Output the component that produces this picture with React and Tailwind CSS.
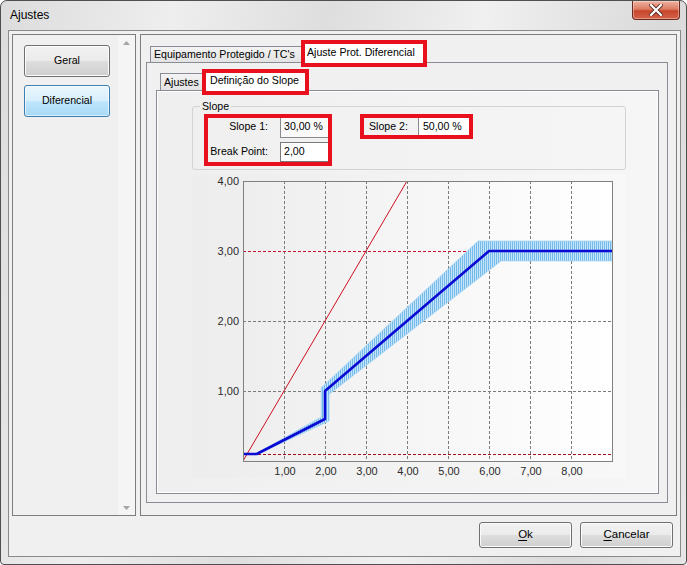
import React from "react";

// Win7-style dialog: "Ajustes" with slope chart
function CloseButton() {
  return (
    <div className="mr-[6px] w-[48px] h-[19px] rounded-b-[4px] border border-t-0 border-[#6e2a20] bg-[linear-gradient(#eeb3a4_0%,#dd7c62_45%,#c8452b_55%,#d3644a_100%)] shadow-[inset_0_0_0_1px_rgba(255,255,255,0.35)] flex items-center justify-center">
      <svg width="14" height="12" viewBox="0 0 14 12">
        <path d="M2 1 L12 11 M12 1 L2 11" stroke="#5a2a22" strokeWidth="4" strokeLinecap="square" />
        <path d="M2 1 L12 11 M12 1 L2 11" stroke="#ffffff" strokeWidth="2.2" strokeLinecap="square" />
      </svg>
    </div>
  );
}

function SideButton({ active, children }) {
  return (
    <div
      className={
        active
          ? "w-[86px] h-[32px] rounded-[3px] border border-[#3c7fb1] bg-[linear-gradient(#eaf6fd_0%,#d9f0fc_48%,#bee6fd_52%,#a7d9f5_100%)] shadow-[inset_0_0_0_1px_rgba(255,255,255,0.6)] flex items-center justify-center"
          : "w-[86px] h-[32px] rounded-[3px] border border-[#707070] bg-[linear-gradient(#f2f2f2_0%,#ebebeb_48%,#dddddd_52%,#cfcfcf_100%)] shadow-[inset_0_0_0_1px_#fbfbfb] flex items-center justify-center"
      }
    >
      {children}
    </div>
  );
}

function DialogButton({ hot, rest }) {
  return (
    <div className="w-[93px] h-[26px] rounded-[3px] border border-[#707070] bg-[linear-gradient(#f2f2f2_0%,#ebebeb_48%,#dddddd_52%,#cfcfcf_100%)] shadow-[inset_0_0_0_1px_#fbfbfb] flex items-center justify-center text-[11.5px]">
      <span>
        <span className="underline underline-offset-2">{hot}</span>
        {rest}
      </span>
    </div>
  );
}

function LeftPanel() {
  return (
    <div className="w-[124px] h-[482px] border border-[#7d7d7d] flex">
      <div className="flex-1 flex flex-col gap-[8px] pl-[11px] pt-[10px]">
        <SideButton>Geral</SideButton>
        <SideButton active>Diferencial</SideButton>
      </div>
      <div className="w-[17px] bg-[#f5f5f5] flex flex-col items-center justify-between pt-[6px] pb-[5px]">
        <svg width="7" height="4" viewBox="0 0 7 4">
          <path d="M0 4 L3.5 0 L7 4 Z" fill="#a6a6a6" />
        </svg>
        <svg width="7" height="4" viewBox="0 0 7 4">
          <path d="M0 0 L7 0 L3.5 4 Z" fill="#a6a6a6" />
        </svg>
      </div>
    </div>
  );
}

function SlopeChart() {
  const px = (x) => 51 + x * 41;
  const py = (y) => 287 - y * 70;
  const curve = [[0, 0.1], [1 / 3, 0.1], [2, 0.6], [2, 1], [6, 3], [9, 3]];
  const band = (k) =>
    curve.map(([x, y], i) => [i === curve.length - 1 ? 9 : Math.min(9, x / k), y * k]);
  const toPts = (list) => list.map(([x, y]) => `${px(x).toFixed(1)},${py(y).toFixed(1)}`).join(" ");
  const bandPts = toPts([...band(1.047), ...band(0.953).reverse()]);

  return (
    <svg width="434" height="304" className="block">
      <defs>
        <linearGradient id="chartBg" x1="0" x2="1" y1="0" y2="0">
          <stop offset="0" stopColor="#ededed" />
          <stop offset="1" stopColor="#f8f8f8" />
        </linearGradient>
        <linearGradient id="plotBg" x1="0" x2="1" y1="0" y2="0">
          <stop offset="0" stopColor="#eeeeee" />
          <stop offset="1" stopColor="#ffffff" />
        </linearGradient>
        <pattern id="hatch" width="2" height="4" patternUnits="userSpaceOnUse">
          <rect width="2" height="4" fill="#c6e4f9" />
          <rect width="1" height="4" fill="#74bbec" />
        </pattern>
        <clipPath id="plotClip">
          <rect x="51" y="7" width="369" height="280" />
        </clipPath>
      </defs>
      <rect width="434" height="304" fill="url(#chartBg)" />
      <rect x="51" y="7" width="369" height="280" fill="url(#plotBg)" />

      <g stroke="#7a7a7a" strokeWidth="1" strokeDasharray="3 2">
        {[1, 2, 3, 4, 5, 6, 7, 8].map((i) => (
          <line key={i} x1={px(i) + 0.5} y1="7" x2={px(i) + 0.5} y2="287" />
        ))}
        {[1, 2, 3].map((j) => (
          <line key={j} x1="51" y1={py(j) + 0.5} x2="420" y2={py(j) + 0.5} />
        ))}
      </g>

      <g clipPath="url(#plotClip)">
        <line x1={px(0)} y1={py(0)} x2={px(4)} y2={py(4)} stroke="#cc1020" strokeWidth="1" />
        <line x1="51" y1={py(3) + 0.5} x2={px(6)} y2={py(3) + 0.5} stroke="#c8102a" strokeDasharray="3 2" />
        <line x1="51" y1={py(0.1) + 0.5} x2="420" y2={py(0.1) + 0.5} stroke="#a01018" strokeDasharray="3 2" />
        <polygon points={bandPts} fill="url(#hatch)" stroke="#9fd2f4" strokeWidth="0.8" />
        <polyline points={toPts(curve)} fill="none" stroke="#0a0ad2" strokeWidth="2.6" strokeLinejoin="round" />
      </g>

      <rect x="51.5" y="7.5" width="369" height="280" fill="none" stroke="#808080" />

      <g fontSize="11" fill="#2b2b2b" fontFamily="'Liberation Sans', Arial, sans-serif">
        {[1, 2, 3, 4].map((j) => (
          <text key={j} x="47" y={py(j) + 4} textAnchor="end">
            {j},00
          </text>
        ))}
        {[1, 2, 3, 4, 5, 6, 7, 8].map((i) => (
          <text key={i} x={px(i) + 1} y="301" textAnchor="middle">
            {i},00
          </text>
        ))}
      </g>
    </svg>
  );
}

function SlopeGroup() {
  return (
    <fieldset className="ml-[35px] w-[434px] h-[70px] border border-[#d3d3d3] rounded-[3px] pl-[15px]">
      <legend className="-ml-[8px] px-[2px] leading-[13px]">Slope</legend>
      <div className="flex items-start mt-[5px]">
        <div className="relative z-10 w-[120px] h-[44px] shrink-0 outline-4 outline-[#e8101c] flex flex-col">
          <div className="h-[18px] flex items-center">
            <span className="w-[60px] shrink-0 text-right whitespace-nowrap">Slope 1:</span>
            <div className="ml-[12px] w-[50px] h-[21px] shrink-0 border border-[#8a8a8a] bg-[#fafafa] pl-[3px] flex items-center whitespace-nowrap">
              30,00 %
            </div>
          </div>
          <div className="mt-[6px] h-[20px] flex items-center">
            <span className="w-[60px] shrink-0 text-right whitespace-nowrap">Break Point:</span>
            <div className="ml-[12px] w-[50px] h-[20px] shrink-0 border border-[#7a7a7a] bg-white pl-[3px] flex items-center">
              2,00
            </div>
          </div>
        </div>
        <div className="relative z-10 ml-[36px] w-[105px] h-[17px] shrink-0 outline-4 outline-[#e8101c] flex items-center pl-[5px]">
          <span className="whitespace-nowrap">Slope 2:</span>
          <div className="ml-[10px] w-[52px] h-[21px] shrink-0 border border-[#8a8a8a] bg-white pl-[4px] flex items-center whitespace-nowrap">
            50,00 %
          </div>
        </div>
      </div>
    </fieldset>
  );
}

function RightPanel() {
  return (
    <div className="ml-[4px] w-[537px] h-[482px] border border-[#7d7d7d] pl-[5px]">
      <div className="h-[27px] flex items-end pl-[4px]">
        <div className="w-[152px] h-[16px] shrink-0 border border-b-0 border-[#898c95] bg-[linear-gradient(#f3f3f3,#e3e3e3)] pl-[3px] leading-[15px] whitespace-nowrap overflow-hidden">
          Equipamento Protegido / TC's
        </div>
        <div className="relative z-10 ml-[3px] -mb-px w-[118px] h-[19px] shrink-0 bg-white outline-4 outline-[#e8101c] pl-[2px] leading-[16px] whitespace-nowrap">
          Ajuste Prot. Diferencial
        </div>
      </div>
      <div className="w-[522px] h-[441px] border border-[#898c95] bg-[#f0f0f0] pl-[9px]">
        <div className="h-[27px] flex items-end pl-[4px]">
          <div className="w-[43px] h-[17px] shrink-0 border border-b-0 border-[#898c95] bg-[linear-gradient(#f3f3f3,#e3e3e3)] pl-[3px] leading-[16px] whitespace-nowrap">
            Ajustes
          </div>
          <div className="relative z-10 ml-[3px] -mb-px w-[99px] h-[18px] shrink-0 bg-white outline-4 outline-[#e8101c] pl-[4px] leading-[15px] whitespace-nowrap">
            Definição do Slope
          </div>
        </div>
        <div className="w-[503px] h-[404px] border border-[#898c95] shadow-[inset_1px_1px_0_#ffffff,inset_-1px_-1px_0_#ffffff] bg-[linear-gradient(90deg,#efefef,#f6f6f6)] pt-[9px]">
          <SlopeGroup />
          <div className="ml-[35px] mt-[4px]">
            <SlopeChart />
          </div>
        </div>
      </div>
    </div>
  );
}

export default function App() {
  return (
    <div className="w-[687px] h-[565px] overflow-hidden bg-white">
      <div className="w-[687px] h-[565px] flex flex-col border border-[#4f4f4f] rounded-t-[7px] rounded-b-[4px] bg-[linear-gradient(100deg,#dcdcdc_0%,#eeeeee_22%,#dedede_42%,#f0f0f0_62%,#dadada_85%,#e6e6e6_100%)] font-['Liberation_Sans',Arial,sans-serif] text-[10.6px] text-black">
        <div className="h-[29px] flex items-start justify-between">
          <span className="ml-[9px] mt-[7px] text-[12px] leading-[15px]">Ajustes</span>
          <CloseButton />
        </div>
        <div className="ml-[7px] w-[673px] h-[527px] border border-[#8a8a8a] bg-[#f0f0f0] flex flex-col">
          <div className="flex pl-[3px] pt-[3px]">
            <LeftPanel />
            <RightPanel />
          </div>
          <div className="flex justify-end gap-[8px] pr-[7px] mt-[6px]">
            <DialogButton hot="O" rest="k" />
            <DialogButton hot="C" rest="ancelar" />
          </div>
        </div>
      </div>
    </div>
  );
}
